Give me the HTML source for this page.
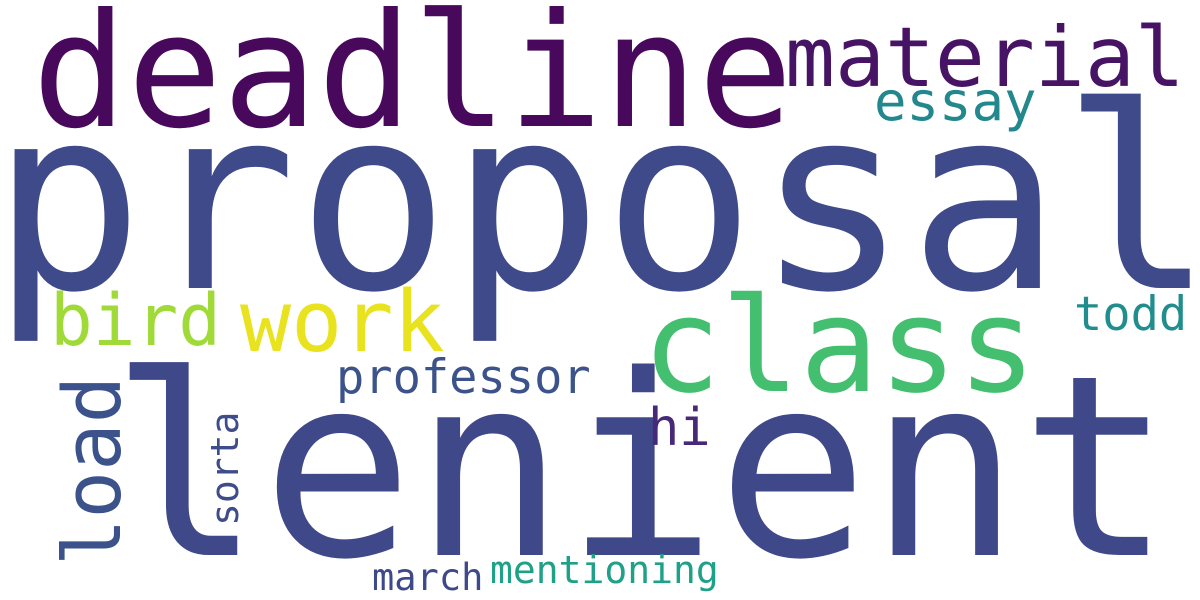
<!DOCTYPE html>
<html><head><meta charset="utf-8"><style>
html,body{margin:0;padding:0;background:#fff;width:1200px;height:600px;overflow:hidden}
svg{display:block}
text{font-family:"DejaVu Sans Mono","Liberation Mono",monospace}
</style></head><body>
<svg width="1200" height="600" viewBox="0 0 1200 600" xmlns="http://www.w3.org/2000/svg">
<rect width="1200" height="600" fill="#fff"/>
<text x="32" y="126" font-size="158" fill="#48095c">deadline</text>
<text x="785" y="86" font-size="83" fill="#471465">material</text>
<text x="874" y="120" font-size="54" fill="#23888e">essay</text>
<text x="-9" y="288" font-size="254" fill="#3e4a89">proposal</text>
<text x="110" y="555" font-size="252" fill="#3f4889">lenient</text>
<text x="642" y="391" font-size="131" fill="#44bf70">class</text>
<text x="240" y="351" font-size="85" fill="#e8e31e">work</text>
<text x="50" y="345" font-size="71" fill="#a0da39">bird</text>
<text x="1074" y="330" font-size="47" fill="#218e8d">todd</text>
<text x="336" y="393" font-size="47" fill="#3b528b">professor</text>
<text x="648" y="445" font-size="52" fill="#482878">hi</text>
<text transform="translate(120,566) rotate(-90)" font-size="79" fill="#3b528b">load</text>
<text transform="translate(238,526) rotate(-90)" font-size="38" fill="#3e4c8a">sorta</text>
<text x="372" y="590" font-size="37" fill="#3e4989">march</text>
<text x="490" y="583" font-size="38" fill="#1fa187">mentioning</text>
</svg>
</body></html>
